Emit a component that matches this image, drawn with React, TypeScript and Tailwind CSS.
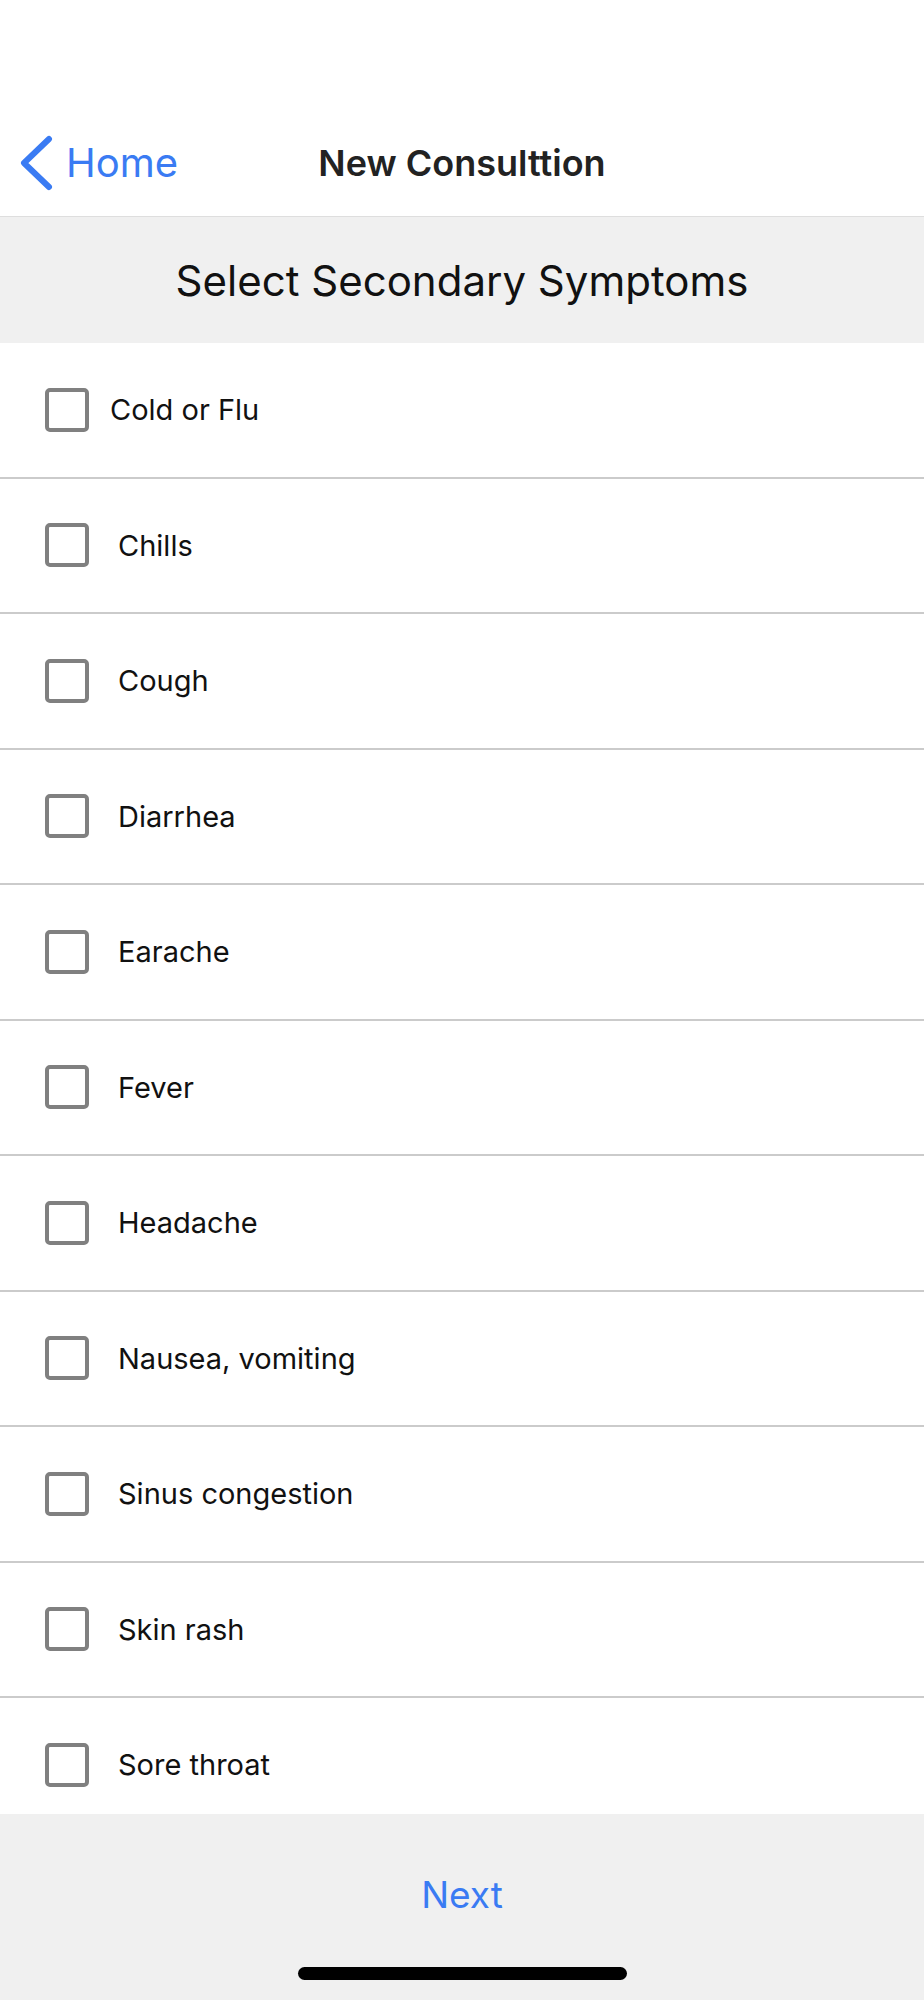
const symptoms = [
  'Cold or Flu',
  'Chills',
  'Cough',
  'Diarrhea',
  'Earache',
  'Fever',
  'Headache',
  'Nausea, vomiting',
  'Sinus congestion',
  'Skin rash',
  'Sore throat',
];

function Chevron() {
  return (
    <svg width="36" height="56" viewBox="0 0 36 56" fill="none">
      <polyline
        points="31,4 6,28 31,52"
        stroke="#3a7bf3"
        strokeWidth="6"
        strokeLinecap="round"
        strokeLinejoin="round"
      />
    </svg>
  );
}

function SymptomRow({ label, first }: { label: string; first: boolean }) {
  return (
    <div className="flex h-[135.5px] shrink-0 items-center border-b-2 border-[#cbcbcb] bg-white pl-[45px]">
      <div className="h-[44px] w-[44px] shrink-0 rounded-[5px] border-[4px] border-[#808080]" />
      <span
        className={
          'text-[29px] text-[#111] ' + (first ? 'ml-[21px]' : 'ml-[29px]')
        }
      >
        {label}
      </span>
    </div>
  );
}

export default function App() {
  return (
    <div
      className="flex h-[2000px] w-[924px] flex-col overflow-hidden bg-white"
      style={{ fontFamily: 'Inter, "Liberation Sans", sans-serif' }}
    >
      {/* nav bar */}
      <div className="h-[109px] shrink-0" />
      <div className="relative flex h-[108px] shrink-0 items-center border-b border-[#dedede]">
        <div className="flex items-center pl-[18px]">
          <Chevron />
          <span className="ml-[12px] text-[40px] text-[#3a7bf3]">Home</span>
        </div>
        <div className="pointer-events-none absolute inset-x-0 top-0 flex h-full items-center justify-center">
          <span className="text-[36px] font-semibold text-[#222]">
            New Consulttion
          </span>
        </div>
      </div>

      {/* section title */}
      <div className="flex h-[126px] shrink-0 items-center justify-center bg-[#f0f0f0]">
        <span className="text-[42px] text-[#111]">Select Secondary Symptoms</span>
      </div>

      {/* list */}
      <div className="flex flex-1 flex-col overflow-hidden">
        {symptoms.map((s, i) => (
          <SymptomRow key={s} label={s} first={i === 0} />
        ))}
      </div>

      {/* footer */}
      <div className="flex h-[186px] shrink-0 flex-col items-center bg-[#f0f0f0]">
        <span className="mt-[53px] text-[37px] text-[#3a7bf3]">Next</span>
        <div className="mt-auto mb-[20px] h-[13px] w-[329px] rounded-full bg-black" />
      </div>
    </div>
  );
}
